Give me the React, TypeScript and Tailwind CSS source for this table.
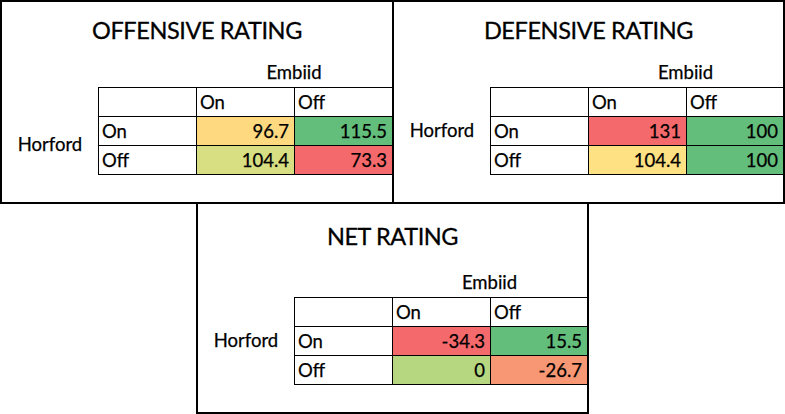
import React from "react";

type Cell = { v: string; c: string };

const font = { fontFamily: "Lato, 'Open Sans', sans-serif" };

function Body({ rows, span }: { rows: Cell[][]; span: boolean }) {
  return (
    <div className="flex text-[18.5px] text-black [-webkit-text-stroke:0.25px_black]">
      <div className="w-[96px] shrink-0 flex flex-col justify-end">
        <div
          className={
            span
              ? "h-[58px] mb-[1px] flex items-center justify-center"
              : "h-[28px] mb-[30px] flex items-center justify-center"
          }
        >
          Horford
        </div>
      </div>
      <div className="flex-1 flex flex-col">
        <div className="grid grid-cols-[98px_98px_1fr] h-[29px]">
          <div />
          <div className="col-span-2 text-center leading-[29px]">Embiid</div>
        </div>
        <div className="grid grid-cols-[98px_98px_1fr] border-l border-t border-black">
          <div className="h-[29px] border-r border-b border-black" />
          <div className="h-[29px] border-r border-b border-black pl-[3px] leading-[28px]">On</div>
          <div className="h-[29px] border-b border-black pl-[3px] leading-[28px]">Off</div>
          {rows.map((r, i) => (
            <React.Fragment key={i}>
              <div className="h-[29px] border-r border-b border-black pl-[3px] leading-[28px]">
                {i === 0 ? "On" : "Off"}
              </div>
              {r.map((c, j) => (
                <div
                  key={j}
                  className={
                    j === 0
                      ? "h-[29px] border-r border-b border-black pr-[5px] text-right leading-[28px]"
                      : "h-[29px] border-b border-black pr-[5px] text-right leading-[28px]"
                  }
                  style={{ backgroundColor: c.c }}
                >
                  {c.v}
                </div>
              ))}
            </React.Fragment>
          ))}
        </div>
      </div>
    </div>
  );
}

const off: Cell[][] = [
  [
    { v: "96.7", c: "#FED980" },
    { v: "115.5", c: "#63BE7B" },
  ],
  [
    { v: "104.4", c: "#D7DF82" },
    { v: "73.3", c: "#F4696B" },
  ],
];
const def: Cell[][] = [
  [
    { v: "131", c: "#F4696B" },
    { v: "100", c: "#63BE7B" },
  ],
  [
    { v: "104.4", c: "#FEE182" },
    { v: "100", c: "#63BE7B" },
  ],
];
const net: Cell[][] = [
  [
    { v: "-34.3", c: "#F4696B" },
    { v: "15.5", c: "#63BE7B" },
  ],
  [
    { v: "0", c: "#B7D680" },
    { v: "-26.7", c: "#F79773" },
  ],
];

const titleCls =
  "text-[23.5px] leading-[30px] tracking-[-0.4px] text-center text-black [-webkit-text-stroke:0.3px_black]";

export default function App() {
  return (
    <div className="w-[785px] h-[414px] bg-white overflow-hidden flex flex-col" style={font}>
      <div className="flex">
        <div className="w-[394px] h-[204px] border-2 border-black pt-[13px]">
          <div className={titleCls}>OFFENSIVE RATING</div>
          <div className="mt-[13px]">
            <Body rows={off} span={true} />
          </div>
        </div>
        <div className="w-[391px] h-[204px] border-t-2 border-r-2 border-b-2 border-black pt-[13px]">
          <div className={titleCls}>DEFENSIVE RATING</div>
          <div className="mt-[13px]">
            <Body rows={def} span={false} />
          </div>
        </div>
      </div>
      <div className="ml-[196px] w-[393px] h-[210px] border-l-2 border-r-2 border-b-2 border-black pt-[17px]">
        <div className={titleCls}>NET RATING</div>
        <div className="mt-[17px]">
          <Body rows={net} span={false} />
        </div>
      </div>
    </div>
  );
}
